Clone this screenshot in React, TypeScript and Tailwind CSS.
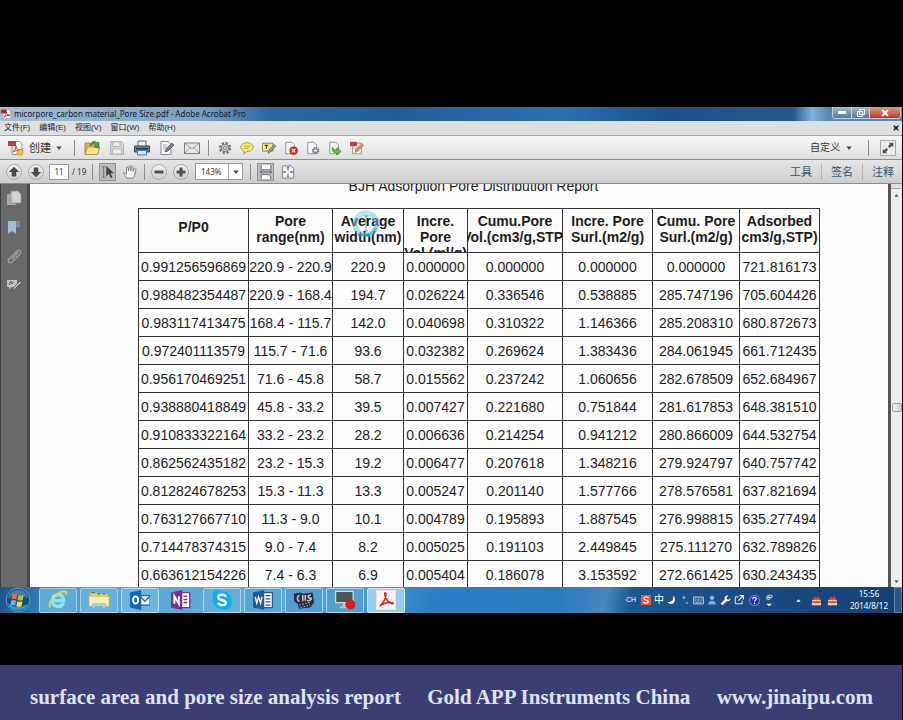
import type { ReactNode } from 'react';

type Column = { title: string[]; width: string };

const columns: Column[] = [
  { title: ['P/P0'], width: 'w-[110px]' },
  { title: ['Pore', 'range(nm)'], width: 'w-[84px]' },
  { title: ['Average', 'width(nm)'], width: 'w-[71px]' },
  { title: ['Incre.', 'Pore', 'Vol.(ml/g)'], width: 'w-[64px]' },
  { title: ['Cumu.Pore', 'Vol.(cm3/g,STP)'], width: 'w-[95px]' },
  { title: ['Incre. Pore', 'Surl.(m2/g)'], width: 'w-[90px]' },
  { title: ['Cumu. Pore', 'Surl.(m2/g)'], width: 'w-[87px]' },
  { title: ['Adsorbed', 'cm3/g,STP)'], width: 'w-[80px]' },
];

const rows = [
  ['0.991256596869', '220.9 - 220.9', '220.9', '0.000000', '0.000000', '0.000000', '0.000000', '721.816173'],
  ['0.988482354487', '220.9 - 168.4', '194.7', '0.026224', '0.336546', '0.538885', '285.747196', '705.604426'],
  ['0.983117413475', '168.4 - 115.7', '142.0', '0.040698', '0.310322', '1.146366', '285.208310', '680.872673'],
  ['0.972401113579', '115.7 - 71.6', '93.6', '0.032382', '0.269624', '1.383436', '284.061945', '661.712435'],
  ['0.956170469251', '71.6 - 45.8', '58.7', '0.015562', '0.237242', '1.060656', '282.678509', '652.684967'],
  ['0.938880418849', '45.8 - 33.2', '39.5', '0.007427', '0.221680', '0.751844', '281.617853', '648.381510'],
  ['0.910833322164', '33.2 - 23.2', '28.2', '0.006636', '0.214254', '0.941212', '280.866009', '644.532754'],
  ['0.862562435182', '23.2 - 15.3', '19.2', '0.006477', '0.207618', '1.348216', '279.924797', '640.757742'],
  ['0.812824678253', '15.3 - 11.3', '13.3', '0.005247', '0.201140', '1.577766', '278.576581', '637.821694'],
  ['0.763127667710', '11.3 - 9.0', '10.1', '0.004789', '0.195893', '1.887545', '276.998815', '635.277494'],
  ['0.714478374315', '9.0 - 7.4', '8.2', '0.005025', '0.191103', '2.449845', '275.111270', '632.789826'],
  ['0.663612154226', '7.4 - 6.3', '6.9', '0.005404', '0.186078', '3.153592', '272.661425', '630.243435'],
];

const menus = ['文件(F)', '编辑(E)', '视图(V)', '窗口(W)', '帮助(H)'];

const Icon = ({ children, className = 'size-4' }: { children: ReactNode; className?: string }) => (
  <svg viewBox="0 0 16 16" className={`shrink-0 ${className}`} fill="none" aria-hidden="true">
    {children}
  </svg>
);

const Caret = () => (
  <Icon className="size-[6px]">
    <path d="M1 4h14L8 13z" fill="#444" />
  </Icon>
);

const Divider = () => <span className="h-4 w-px shrink-0 bg-[#888]" />;

const PageShape = () => (
  <path d="M2 1.5h7l3 3v10H2z" fill="#f5f6f8" stroke="#858a93" />
);

const fileTools = [
  {
    name: 'Open',
    icon: (
      <>
        <path d="M1 14V3h5l1 2h7v9z" fill="#d9b64a" stroke="#93762a" strokeWidth=".8" />
        <path d="M1 14.5 3.5 7H16l-2.5 7.5z" fill="#f6e08a" stroke="#a58834" strokeWidth=".8" />
        <path d="M6 6C7 1 11 0 13 3l2-1v6l-5-1 2-2C10 3 8 4 6 6z" fill="#4da536" stroke="#2c7423" strokeWidth=".6" />
      </>
    ),
  },
  {
    name: 'Save',
    icon: (
      <>
        <path d="M1.5 1.5h11l2 2v11h-13z" fill="#d4d5d7" stroke="#b0b1b4" />
        <path d="M4 2h7v4.500H4zM3.500 9h9v5h-9z" fill="#eee" stroke="#b7b8bb" />
      </>
    ),
  },
  {
    name: 'Print',
    icon: (
      <>
        <path d="M4 1h8v6H4z" fill="#eef4fa" stroke="#5b6878" />
        <path d="M.5 6h15v6H.5z" fill="#688199" stroke="#34495e" />
        <path d="M2 8h12v1.500H2z" fill="#263747" />
        <path d="M3.500 10.500h9v4.500h-9z" fill="#cfe3f5" stroke="#55779a" />
      </>
    ),
  },
  {
    name: 'Edit document',
    icon: (
      <>
        <PageShape />
        <path d="M4 5h4M4 7h4M4 9h2" stroke="#a8adb5" />
        <path d="m6 12 1-3 6-6 2 2-6 6z" fill="#7b828c" stroke="#494e55" strokeWidth=".7" />
      </>
    ),
  },
  {
    name: 'Email',
    icon: (
      <>
        <path d="M.5 3h15v10.500H.5z" fill="#e6e8ea" stroke="#787c82" />
        <path d="m1 3.500 7 5.500 7-5.500M1 13l5-5.500M15 13l-5-5.500" stroke="#8c9096" strokeWidth=".9" />
      </>
    ),
  },
];

const quickTools = [
  {
    name: 'Settings',
    icon: (
      <>
        <circle cx="8" cy="8" r="5.800" stroke="#73777c" strokeWidth="2.600" strokeDasharray="2.600 1.950" />
        <circle cx="8" cy="8" r="4.300" fill="#c3c5c8" stroke="#73777c" strokeWidth="1.300" />
        <circle cx="8" cy="8" r="1.700" fill="#eee" stroke="#73777c" />
      </>
    ),
  },
  {
    name: 'Comment',
    icon: (
      <>
        <path d="M8 2c4 0 7 2 7 5s-3 5-7 5l-4 3 .5-3.500C2 10.500 1 9 1 7c0-3 3-5 7-5z" fill="#f1ec7b" stroke="#98962f" />
        <path d="M4.500 6h7M4.500 8.500h5" stroke="#a8a440" />
      </>
    ),
  },
  {
    name: 'Highlight',
    icon: (
      <>
        <path d="M.5 2.500h12v9H.5z" fill="#f8ee74" stroke="#77744a" />
        <path d="M3 5h4M5 5v4" stroke="#444" strokeWidth="1.200" />
        <path d="m7 14 1-4 6-6 2 2-6 6z" fill="#9aa0a7" stroke="#4d5258" strokeWidth=".8" />
      </>
    ),
  },
  {
    name: 'Delete pages',
    icon: (
      <>
        <PageShape />
        <circle cx="11" cy="11" r="4.500" fill="#cf2c2b" stroke="#8d1918" strokeWidth=".6" />
        <path d="m9 9 4 4m0-4-4 4" stroke="#fff" strokeWidth="1.300" />
      </>
    ),
  },
  {
    name: 'Page options',
    icon: (
      <>
        <PageShape />
        <circle cx="11" cy="11" r="3.200" fill="#d7dce2" stroke="#68727e" strokeWidth="2" strokeDasharray="1.600 .9" />
        <circle cx="11" cy="11" r="2.300" fill="#dfe3e8" stroke="#68727e" />
      </>
    ),
  },
  {
    name: 'Export page',
    icon: (
      <>
        <PageShape />
        <path d="M5 7c1 3 3 3 5 3V7.500l5 4.500-5 4v-2.500c-4 0-6-2-5-6.500z" fill="#68b93f" stroke="#367322" strokeWidth=".7" />
      </>
    ),
  },
  {
    name: 'Edit PDF',
    icon: (
      <>
        <path d="M3 2.500h10v12H3z" fill="#f7f7f7" stroke="#8a8a8a" />
        <path d="M0 1h8v5H0z" fill="#c63a3e" />
        <path d="M5 8h4M5 10h3" stroke="#bbb" />
        <path d="m6 13 1-3.500L13.500 3l2 2L9 11.500z" fill="#eb925a" stroke="#a74e2b" strokeWidth=".7" />
      </>
    ),
  },
];

const RoundButton = ({ name, children }: { name: string; children: ReactNode }) => (
  <button
    type="button"
    aria-label={name}
    className="flex size-4 shrink-0 items-center justify-center rounded-full border border-[#a9a9a9] bg-linear-to-b from-[#f4f4f4] to-[#cfcfcf]"
  >
    <Icon className="size-3">{children}</Icon>
  </button>
);

const TitleBar = () => (
  <header className="flex h-[14px] shrink-0 items-start justify-between bg-[linear-gradient(90deg,#a5bed6_0%,#8badcb_12%,#7ba1c5_22%,#2b66a1_30%,#235d99_44%,#2c70ae_62%,#1b508c_74%,#24598f_88%,#7fb2dc_90%,#5a86b0_92%)]">
    <div className="flex h-full items-center gap-[3px] pl-px">
      <Icon className="size-[10px]">
        <path d="M3 1h9l3 3v11H3z" fill="#fff" stroke="#999" />
        <path d="M0 1h9v6H0z" fill="#b81e22" />
        <path d="M5 13c3-3 4-7 3-9 0 4 3 6 6 6-4 0-7 1-9 3z" stroke="#c62026" strokeWidth="1.500" />
      </Icon>
      <h1 className="font-['Noto_Sans',sans-serif] text-[8px] leading-[14px] whitespace-nowrap text-[#101a2a]">
        micorpore_carbon material_Pore Size.pdf - Adobe Acrobat Pro
      </h1>
    </div>
    <div className="mr-px flex h-3 overflow-hidden rounded-b-sm border border-t-0 border-[#c3d3e3]">
      <button type="button" aria-label="Minimize" className="flex w-[18px] items-center justify-center bg-linear-to-b from-[#a9bdd1] to-[#53789e]">
        <span className="h-[3px] w-2 bg-white" />
      </button>
      <button type="button" aria-label="Restore" className="flex w-[18px] items-center justify-center border-l border-[#c3d3e3] bg-linear-to-b from-[#a9bdd1] to-[#53789e]">
        <Icon className="size-2">
          <path d="M5 1h10v10H5zM1 5h10v10H1z" stroke="#fff" strokeWidth="2" />
        </Icon>
      </button>
      <button type="button" aria-label="Close" className="flex w-[31px] items-center justify-center border-l border-[#c3d3e3] bg-linear-to-b from-[#dd9a8a] to-[#bd3420]">
        <Icon className="size-2">
          <path d="m2 2 12 12m0-12L2 14" stroke="#fff" strokeWidth="4" />
        </Icon>
      </button>
    </div>
  </header>
);

const MenuBar = () => (
  <nav className="flex h-[14px] shrink-0 items-center justify-between bg-[#dedfe0] pr-[3px] pl-1 text-[8px] leading-[14px] text-[#222]">
    <div className="flex gap-[9px]">
      {menus.map((menu) => (
        <button key={menu} type="button" className="whitespace-nowrap">
          {menu}
        </button>
      ))}
    </div>
    <button type="button" aria-label="Close document">
      <Icon className="size-[6px]">
        <path d="m2 2 12 12m0-12L2 14" stroke="#111" strokeWidth="4" />
      </Icon>
    </button>
  </nav>
);

const FileToolbar = () => (
  <div className="flex h-[25px] shrink-0 items-center justify-between border-y border-t-[#a5a5a5] border-b-[#8d8d8d] bg-linear-to-b from-[#f7f7f7] to-[#dfdfdf] pr-[6px] pl-2 text-[#333]">
    <div className="flex items-center">
      <button type="button" className="mr-3 flex items-center gap-[5px] text-[11px] leading-4">
        <Icon>
          <path d="M4 1.500h8l2 2v11H4z" fill="#f4f4f4" stroke="#8e8e8e" />
          <path d="M0 1h8v5H0z" fill="#c13b40" />
          <path d="M5 12c2-2 3-4 3-6 0 3 2 4 4 4-3 0-5 1-7 2z" stroke="#c54044" />
          <circle cx="12" cy="12.500" r="3" fill="#f1c43b" stroke="#c1912a" strokeWidth=".7" />
        </Icon>
        <span className="whitespace-nowrap">创建</span>
        <Caret />
      </button>
      <Divider />
      <div className="mx-1 flex">
        {fileTools.map((tool) => (
          <button key={tool.name} type="button" aria-label={tool.name} className="flex w-[25px] justify-center">
            <Icon>{tool.icon}</Icon>
          </button>
        ))}
      </div>
      <Divider />
      <div className="ml-[5px] flex">
        {quickTools.map((tool) => (
          <button key={tool.name} type="button" aria-label={tool.name} className="flex w-[22px] justify-center">
            <Icon className="size-[14px]">{tool.icon}</Icon>
          </button>
        ))}
      </div>
    </div>
    <div className="flex items-center">
      <button type="button" className="mr-4 flex items-center gap-[6px] text-[10px] leading-4 whitespace-nowrap">
        自定义
        <Caret />
      </button>
      <Divider />
      <button type="button" aria-label="Read mode" className="ml-[11px] flex size-4 items-center justify-center border border-[#a8a8a8] bg-[#ececec]">
        <Icon className="size-[14px]">
          <path d="M9 2h5v5l-1.500-1.500L10 8 8 6l2.500-2.500zM7 14H2V9l1.500 1.500L6 8l2 2-2.500 2.500z" fill="#4b4b4b" />
        </Icon>
      </button>
    </div>
  </div>
);

const PageToolbar = () => (
  <div className="flex h-6 shrink-0 items-center justify-between border-b border-[#8b8b8b] bg-linear-to-b from-[#e6e6e6] to-[#cecece] pr-2 pl-[6px] text-[#333]">
    <div className="flex items-center">
      <div className="flex gap-[6px]">
        <RoundButton name="Previous page">
          <path d="m8 1 7 7h-4v6H5V8H1z" fill="#4a4a4a" />
        </RoundButton>
        <RoundButton name="Next page">
          <path d="m8 15 7-7h-4V2H5v6H1z" fill="#4a4a4a" />
        </RoundButton>
      </div>
      <input
        aria-label="Page number"
        defaultValue="11"
        className="ml-[5px] h-4 w-5 border border-[#999] bg-white text-center font-['Noto_Sans',sans-serif] text-[8px] text-[#245]"
      />
      <span className="mr-[3px] ml-[3px] w-[17px] font-['Noto_Sans',sans-serif] text-[8px] whitespace-nowrap">/ 19</span>
      <Divider />
      <button type="button" aria-label="Select tool" className="ml-[6px] flex h-[18px] w-[17px] items-center justify-center border border-[#909090] bg-[#bcbcbc]">
        <Icon className="size-[14px]">
          <path d="M1 2h4M3 2v12M1 14h4" stroke="#777" strokeWidth="1.300" />
          <path d="M6 1v12l3-3 2 5 2-1-2-4.500h4z" fill="#444" />
        </Icon>
      </button>
      <button type="button" aria-label="Hand tool" className="mx-[6px] flex">
        <Icon>
          <path
            d="M5 14 1.500 9.500c-.5-1 .5-1.500 1.500-.5l1.500 1.500V4c0-1.300 1.600-1.300 1.700 0L6.500 7l.5-4.500c.1-1.300 1.700-1.200 1.700 0V7l.8-4c.3-1.200 1.700-1 1.600.3L11 7.500l1.500-2.700c.6-1 1.800-.4 1.500.7L13 10c-.2 2-1 3-2 4z"
            fill="#f7f7f7"
            stroke="#777"
            strokeWidth=".9"
          />
        </Icon>
      </button>
      <Divider />
      <div className="mx-[6px] flex gap-[6px]">
        <RoundButton name="Zoom out">
          <path d="M2 6h12v4H2z" fill="#505050" />
        </RoundButton>
        <RoundButton name="Zoom in">
          <path d="M6 2h4v4h4v4h-4v4H6v-4H2V6h4z" fill="#505050" />
        </RoundButton>
      </div>
      <label className="mr-[7px] flex h-[17px] items-center border border-[#999] bg-white">
        <select
          aria-label="Zoom"
          defaultValue="143%"
          className="w-8 appearance-none pl-[5px] font-['Noto_Sans',sans-serif] text-[8px] leading-[14px]"
        >
          <option>100%</option>
          <option>143%</option>
          <option>200%</option>
        </select>
        <span className="flex h-full w-[14px] items-center justify-center border-l border-[#aaa]">
          <Caret />
        </span>
      </label>
      <Divider />
      <button type="button" aria-label="Fit width" className="ml-[6px] flex h-[18px] w-[17px] items-center justify-center border border-[#909090] bg-[#bcbcbc]">
        <Icon className="size-[14px]">
          <path d="M2.500 0v5.500h11V0M2.500 16v-5h8l3 2.500V16" fill="#fff" stroke="#5b6470" />
          <path d="M1 8h14M3.500 6.500 1.500 8l2 1.500m9-3 2 1.500-2 1.500" stroke="#4b5f78" />
        </Icon>
      </button>
      <button type="button" aria-label="Fit page" className="ml-[7px] flex">
        <Icon className="size-[14px]">
          <path d="M1.500 1h10l3 3v11h-13z" fill="#f7f8fa" stroke="#68727e" />
          <path d="M8 2.500V6M8 13.500V10M2.500 8H6m4 0h3.500M7 3.500l1-1 1 1m-2 9 1 1 1-1M4 7 3 8l1 1m8-2 1 1-1 1" stroke="#456283" strokeWidth="1.200" />
        </Icon>
      </button>
    </div>
    <div className="flex items-center gap-[9px] text-[11px] leading-4 whitespace-nowrap text-[#2d5372]">
      <button type="button">工具</button>
      <span className="h-4 w-px bg-[#b4b4b4]" />
      <button type="button">签名</button>
      <span className="h-4 w-px bg-[#b4b4b4]" />
      <button type="button">注释</button>
    </div>
  </div>
);

const SidePanel = () => (
  <aside className="flex w-[30px] shrink-0 flex-col items-center gap-[13px] border-r-3 border-l border-r-[#474747] border-l-[#3c3c3c] bg-[#696969] pt-[6px]">
    <button type="button" aria-label="Pages">
      <Icon>
        <path d="M1 4h9v11H1z" fill="#aaa" />
        <path d="M5 1h7l3 3v9H5z" fill="#d2d2d2" stroke="#8a8a8a" strokeWidth=".8" />
      </Icon>
    </button>
    <button type="button" aria-label="Bookmarks">
      <Icon>
        <path d="M9 2h5v7l-2-1-3 1z" fill="#6e92ab" />
        <path d="M2 2h8v13l-4-3-4 3z" fill="#9ec0d6" />
      </Icon>
    </button>
    <button type="button" aria-label="Attachments">
      <Icon>
        <path d="m3 11 8-8c2-2 5 0 3 3l-8 8c-3 2-5-1-3-3l7-7c1-1 2 0 1.500 1L6 11" stroke="#a5a5a5" strokeWidth="1.200" />
      </Icon>
    </button>
    <button type="button" aria-label="Signatures">
      <Icon>
        <path d="M1 3h10v7H6l-3 2v-2H1z" fill="#c5c5c5" />
        <path d="m3 8 2-4 1 3 2-2" stroke="#555" />
        <path d="m6 14 2-4 6-6 1.500 1.500-6 6z" fill="#bbb" stroke="#565656" strokeWidth=".8" />
      </Icon>
    </button>
  </aside>
);

const BusyCursor = () => (
  <svg viewBox="0 0 30 30" className="absolute top-0 left-[18px] size-[30px]" fill="none" aria-hidden="true">
    <circle cx="15" cy="15" r="11" stroke="#5cc4e8" strokeOpacity=".5" strokeWidth="5" />
    <path d="M6 9A11 11 0 0 1 20 5" stroke="#c0effc" strokeOpacity=".6" strokeWidth="3" />
    <path d="M25 18a11 11 0 0 1-10 8" stroke="#1b9fd0" strokeOpacity=".5" strokeWidth="3" />
    <path d="M13 7h4M15 7v14M13 22h4" stroke="#2a4d60" strokeOpacity=".6" />
  </svg>
);

const PoreTable = () => (
  <table className="w-[681px] table-fixed border-collapse text-sm text-[#1c1c1c]">
    <thead>
      <tr>
        {columns.map((column, index) => (
          <th key={index} scope="col" className={`relative border border-[#333] p-0 ${column.width}`}>
            <div
              className={`flex h-[43px] flex-col items-center overflow-hidden leading-4 font-bold whitespace-nowrap ${
                column.title.length === 1 ? 'pt-[10px]' : 'pt-1'
              }`}
            >
              {column.title.map((line) => (
                <span key={line}>{line}</span>
              ))}
            </div>
            {column.title[0] === 'Average' && <BusyCursor />}
          </th>
        ))}
      </tr>
    </thead>
    <tbody>
      {rows.map((row) => (
        <tr key={row[0]}>
          {row.map((value, index) => (
            <td key={index} className="border border-[#333] p-0">
              <div className="flex h-[27px] items-center justify-center overflow-hidden whitespace-nowrap">{value}</div>
            </td>
          ))}
        </tr>
      ))}
    </tbody>
  </table>
);

const ScrollBar = () => (
  <div className="flex w-[14px] shrink-0 flex-col items-center justify-between border-l-3 border-[#555] bg-[#ededed] pb-[3px]">
    <div className="flex w-full flex-col items-center gap-1">
      <span className="h-[5px] w-full border-b border-[#aaa] bg-[#ddd]" />
      <Icon className="size-[5px]">
        <path d="M1 12h14L8 3z" fill="#555" />
      </Icon>
    </div>
    <span className="mt-[38px] h-[9px] w-[10px] rounded-xs border border-[#999] bg-linear-to-r from-[#f6f6f6] to-[#cbcbcb]" />
    <Icon className="size-[5px]">
      <path d="M1 4h14l-7 9z" fill="#555" />
    </Icon>
  </div>
);

const taskApps = [
  {
    name: 'Internet Explorer',
    look: 'border-[#a2d3ed] bg-[#5fabd5]',
    icon: (
      <>
        <path d="M12.500 10.500C10 15 3.500 13.500 3.500 8.500S10 2 12 6c.5 1 .5 2 .5 2.500H5" stroke="#8fe6fb" strokeWidth="2.600" />
        <path d="M2 14C-1 11 7 1 13 1c2 0 2 2 1 3" stroke="#f2d155" strokeWidth="1.400" />
      </>
    ),
  },
  {
    name: 'Explorer',
    look: 'border-[#a2d3ed] bg-[#69b1d6]',
    icon: (
      <>
        <path d="M1 2h5l1 1h8v10H1z" fill="#e6cf78" />
        <path d="M2 2h3M7 3h2M11 3h2" stroke="#7b6b3b" />
        <path d="M0 5h16v8H0z" fill="#fbeeb0" stroke="#d0b45c" strokeWidth=".6" />
        <path d="M3 15v-4h10v4h-2v-2H5v2z" fill="#a5daf2" stroke="#6cb3d8" strokeWidth=".6" />
      </>
    ),
  },
  {
    name: 'Outlook',
    look: 'border-[#b0dbf0] bg-[#6fb5da]',
    icon: (
      <>
        <path d="M7.500 4.500H16v7.500H7.500z" fill="#fff" stroke="#1c67b2" />
        <path d="m8 5 4 4 4-4" stroke="#1c67b2" strokeWidth="1.200" />
        <path d="M0 2 9 0v16l-9-2z" fill="#1467b5" />
        <ellipse cx="4.500" cy="8" rx="2" ry="2.800" stroke="#fff" strokeWidth="1.500" />
      </>
    ),
  },
  {
    name: 'OneNote',
    look: 'border-transparent',
    icon: (
      <>
        <path d="M8 2h7v12H8z" fill="#fff" stroke="#85398a" />
        <path d="M10 5h3M10 7.500h3M10 10h3M15 3v3m0 2v3" stroke="#85398a" strokeWidth="1.200" />
        <path d="M0 2 9 0v16l-9-2z" fill="#7c2f86" />
        <path d="M2.700 11V5l3.600 6V5" stroke="#fff" strokeWidth="1.500" />
      </>
    ),
  },
  {
    name: 'Skype',
    look: 'border-[#a9d6ed] bg-[#65aed7]',
    icon: (
      <>
        <path d="M5 0c2 0 2 .7 3 .7 5 0 8 4 7 8.500 2 4-2 8-6 6C4 16 0 12 1 7-1 4 1 0 5 0z" fill="#13aeea" />
        <path d="M11.200 5.500C10 3 5 3 5 6c0 2.500 6 1.500 6 4.200 0 2.500-5 2.500-6.200 0" stroke="#fff" strokeWidth="1.900" />
      </>
    ),
  },
  {
    name: 'Word',
    look: 'border-[#a9d6ed] bg-[#5ca6d3]',
    icon: (
      <>
        <path d="M8 2h7.500v12H8z" fill="#fff" stroke="#2b579a" />
        <path d="M10 4.500h4M10 7h4M10 9.500h4M10 12h4" stroke="#2b579a" />
        <path d="M0 2 9 0v16l-9-2z" fill="#2b579a" />
        <path d="m1.800 5.500 1.200 5 1.500-5 1.500 5 1.200-5" stroke="#fff" strokeWidth="1.100" />
      </>
    ),
  },
  {
    name: 'Video editor',
    look: 'border-[#a9d6ed] bg-[#519fcf]',
    icon: (
      <>
        <path d="m0 3 5-1 2 1 8-1 1 8-3 4-9 1-1-4-3-2z" fill="#2b2a3b" />
        <path d="M4.500 4.500C2.500 4 2 9 4.500 9M7 4v5M9 4v4.500M13.500 4C10.500 4 11 6.500 13 6.500S13 9 10.500 8.500" stroke="#b9c6d8" strokeWidth="1.300" />
        <path d="m4 12 9-2M5 14l8-2" stroke="#a58ac2" strokeDasharray="1.500 1" />
      </>
    ),
  },
  {
    name: 'Screen recorder',
    look: 'border-[#a9d6ed] bg-[#559fce]',
    icon: (
      <>
        <path d="M.5 1h14v9H.5z" fill="#4e5557" stroke="#d5dadd" />
        <path d="M6 10.500h3V13h2v1.500H4V13h2z" fill="#bcc4c8" />
        <circle cx="12.300" cy="11.500" r="3.700" fill="#e21b1b" stroke="#9b1111" strokeWidth=".5" />
      </>
    ),
  },
  {
    name: 'Adobe Acrobat',
    look: 'border-[#d4ecf8] bg-[#9ccbe6]',
    icon: (
      <>
        <path d="M0 0h16v16H0z" fill="#f7f3f3" stroke="#ddd" />
        <path d="M3 13c2-2 5-6 5-10 0-1-1-1-1 0 0 4 3 7 6 8 1 0 1-1-1-1-4 0-7 1-9 3z" stroke="#d02a2b" strokeWidth="1.300" />
      </>
    ),
  },
];

const RedApp = () => (
  <Icon className="size-[11px]">
    <path d="M4 7V4l2-3 2 3 3-3 2 6z" fill="#d8402c" />
    <path d="M2 7h12l1 8H1z" fill="#f3dccb" />
    <path d="M2 9h12v3H2z" fill="#cf4a33" />
  </Icon>
);

const Tray = () => (
  <div className="flex items-center text-white">
    <span className="mr-[5px] text-[7px] leading-4">CH</span>
    <div className="flex items-center gap-[3px]">
      <Icon className="size-[10px]">
        <path d="M0 0h16v16H0z" fill="#e8593a" />
        <path d="M12 4.500C9 2 4 3.500 4.500 6s7 1.500 7 4.500-5 3-8 1" stroke="#fff" strokeWidth="2" />
      </Icon>
      <span className="text-[10px] leading-4">中</span>
      <Icon className="size-[10px]">
        <path d="M10 1c5 4 3 13-3 13-3 0-5-1-6-3 6 1 10-4 9-10z" fill="#fff" />
      </Icon>
      <span className="w-[10px] text-center text-[9px] leading-4">°,</span>
      <Icon className="size-[11px]">
        <path d="M1 3h14v10H1z" stroke="#d7e5f0" strokeWidth="1.300" />
        <path d="M3 6h10M3 8.500h10M4 11h8" stroke="#d7e5f0" strokeWidth="1.300" strokeDasharray="1.500 .7" />
      </Icon>
      <Icon className="size-[10px]">
        <circle cx="8" cy="4.500" r="3.500" fill="#8fb3d6" />
        <path d="M2 15c0-8 12-8 12 0z" fill="#8fb3d6" />
      </Icon>
      <Icon className="size-[11px]">
        <path d="M15 4.500 12.500 7 10 6l-.5-2.500L12 1C9 0 6 3 7 6L1 12.500 3.500 15 10 9c3 1 6-1.500 5-4.500z" fill="#fff" />
      </Icon>
      <Icon className="size-[10px]">
        <path d="M7 3H2v11h11V9" stroke="#e8f0f7" strokeWidth="1.600" />
        <path d="M9 1h6v6M15 1 7 9" stroke="#fff" strokeWidth="1.800" />
      </Icon>
      <Icon className="ml-[2px] size-[11px]">
        <circle cx="8" cy="8" r="7.300" fill="#252fa6" stroke="#9db3e8" />
        <path d="M5.500 6c0-4 5.500-3 5 0-.3 1.500-2.500 1.500-2.500 3.500M8 11v2" stroke="#fff" strokeWidth="1.700" />
      </Icon>
      <Icon className="size-[13px]">
        <path d="M6 1.500h5v3H6zM4.500 3.500h4v3h-4z" stroke="#d7e5f0" />
        <path d="M4 12h7l-3.500 3z" fill="#fff" />
      </Icon>
    </div>
    <div className="mr-3 ml-5 flex items-center gap-[5px]">
      <Icon className="mr-[5px] size-[5px]">
        <path d="M1 12h14L8 4z" fill="#fff" />
      </Icon>
      <RedApp />
      <RedApp />
    </div>
    <div className="flex flex-col items-center font-['Noto_Sans',sans-serif] text-[8px] leading-3 whitespace-nowrap">
      <time>15:56</time>
      <time>2014/8/12</time>
    </div>
    <button type="button" aria-label="Show desktop" className="ml-[6px] h-[26px] w-2 border border-[#5f86ad] bg-[#29578a]" />
  </div>
);

const TaskBar = () => (
  <footer className="flex h-[26px] shrink-0 items-center justify-between bg-[linear-gradient(100deg,#1c5587_0%,#2f79ae_4%,#5aa6d1_10%,#5fadd8_30%,#3f96cf_42%,#2b7fc4_48%,#2a7cc0_62%,#4686ba_67%,#1d5690_70%,#1b4a80_85%,#153f72_100%)]">
    <div className="flex items-center">
      <button type="button" aria-label="Start" className="mr-2 ml-[5px] flex">
        <Icon className="size-[26px]">
          <circle cx="8" cy="8" r="7.300" fill="#164d80" stroke="#58a7cf" strokeWidth=".6" />
          <path d="M2 10c3 3 9 3 12 0-1 6-11 6-12 0z" fill="#3fc1df" fillOpacity=".7" />
          <path d="M2 7c0-7 12-7 12 0-4-3-8-3-12 0z" fill="#a7cee2" fillOpacity=".35" />
          <path d="M4.500 4.500c1-.6 2-.6 3 0L7 7.700c-1-.6-2-.6-3 0z" fill="#ee6a3a" />
          <path d="M8.200 4.800c1 .5 2 .5 3.200 0L11 8c-1 .5-2 .5-3.300 0z" fill="#93cc4a" />
          <path d="M3.800 8.400c1-.6 2-.6 3 0l-.5 3.200c-1-.6-2-.6-3 0z" fill="#5cb6ee" />
          <path d="M7.500 8.700c1 .5 2 .5 3.200 0l-.5 3.200c-1 .5-2 .5-3.200 0z" fill="#fbd650" />
        </Icon>
      </button>
      <div className="flex gap-[3px]">
        {taskApps.map((app) => (
          <button
            key={app.name}
            type="button"
            aria-label={app.name}
            className={`flex h-[25px] w-[38px] items-center justify-center rounded-xs border ${app.look}`}
          >
            <Icon className="size-5">{app.icon}</Icon>
          </button>
        ))}
      </div>
    </div>
    <Tray />
  </footer>
);

export default function App() {
  return (
    <div className="flex h-screen flex-col overflow-hidden bg-black pr-px font-['Liberation_Sans','Noto_Sans_CJK_SC',sans-serif]">
      <div className="flex min-h-0 flex-1 flex-col pt-[107px] pb-[52px]">
        <TitleBar />
        <MenuBar />
        <FileToolbar />
        <PageToolbar />
        <div className="flex min-h-0 flex-1 bg-[#fdfdfd]">
          <SidePanel />
          <main className="min-w-0 flex-1 overflow-hidden pl-[108px]">
            <div className="h-6 w-[671px] overflow-hidden">
              <h2 className="-mt-[6px] text-center text-sm leading-4 text-[#222]">BJH Adsorption Pore Distribution Report</h2>
            </div>
            <PoreTable />
          </main>
          <ScrollBar />
        </div>
        <TaskBar />
      </div>
      <div className="flex h-[55px] shrink-0 items-center justify-between bg-[#3b3d73] pt-2 pr-[29px] pl-[30px] font-['Liberation_Serif',serif] text-[21px] leading-8 font-bold whitespace-nowrap text-[#dfe2f6]">
        <span>surface area and pore size analysis report</span>
        <span>Gold APP Instruments China</span>
        <a href="http://www.jinaipu.com">www.jinaipu.com</a>
      </div>
    </div>
  );
}
